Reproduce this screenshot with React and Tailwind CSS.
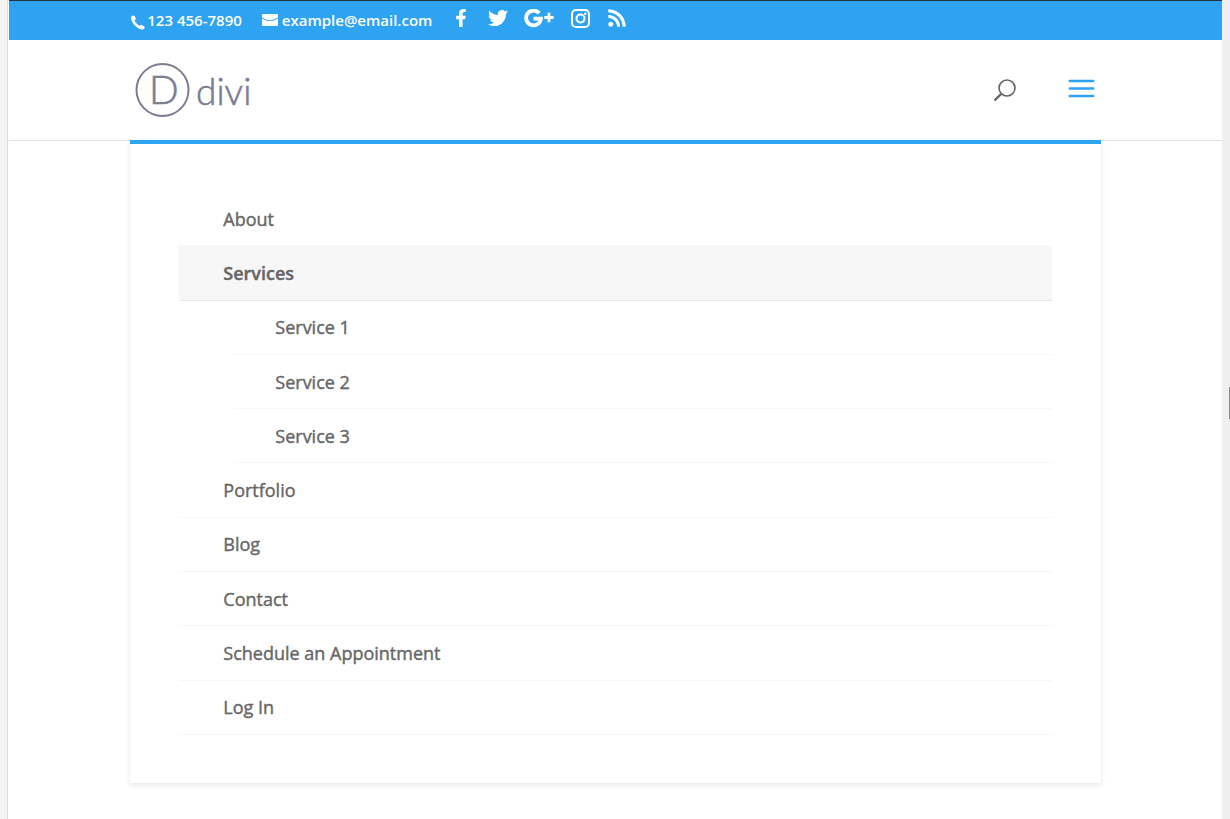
import { FaFacebookF, FaTwitter, FaRss } from 'react-icons/fa';

const rowClass = 'flex items-center border-b border-black/3 pr-6 text-lg font-normal text-[#666] [-webkit-text-stroke:0.4px_#666]';

const services = ['Service 1', 'Service 2', 'Service 3'];
const pages = ['Portfolio', 'Blog', 'Contact', 'Schedule an Appointment', 'Log In'];

function PhoneIcon() {
  return (
    <svg viewBox="0 0 14 15" className="mt-1 h-[15px] w-3.5" fill="currentColor" aria-hidden="true">
      <path d="M0.4 1.4 Q2 -0.2 3.5 0.8 L4.8 3.2 Q5.1 4.4 3.5 5.3 Q4.6 8.5 8.4 10.9 Q9.9 9.4 10.9 9.9 L13.6 11.7 Q14.2 13 12.5 14.2 Q10.4 15.4 6.9 12.9 Q1 9 0.1 3.4 Q0 2 0.4 1.4Z" />
    </svg>
  );
}

function MailIcon() {
  return (
    <svg viewBox="0 0 16 12" className="h-3 w-4" fill="currentColor" aria-hidden="true">
      <path d="M1 0H15Q16 0 16 1V3.5Q11.5 6.2 8 6.200Q4.500 6.200 0 3.500V1Q0 0 1 0Z" />
      <path d="M0 4.400Q4.500 7.100 8 7.100Q11.500 7.100 16 4.400V11Q16 12 15 12H1Q0 12 0 11Z" />
    </svg>
  );
}

function GooglePlusIcon() {
  return (
    <svg viewBox="0 0 30 19" className="h-[19px] w-[30px]" fill="none" stroke="currentColor" aria-hidden="true">
      <path d="M15.200 4.200A7.400 7.400 0 1 0 16.900 9.600H9.500" strokeWidth="3.800" />
      <path d="M25 3.800V13.200M20.300 8.500H29.700" strokeWidth="2.800" />
    </svg>
  );
}

function InstagramIcon() {
  return (
    <svg viewBox="0 0 19 19" className="h-[19px] w-[19px]" fill="none" stroke="currentColor" strokeWidth="2" aria-hidden="true">
      <rect x="1" y="1" width="17" height="17" rx="4" />
      <circle cx="9.500" cy="9.500" r="4" />
      <circle cx="14.300" cy="4.700" r="1.200" fill="currentColor" stroke="none" />
    </svg>
  );
}

function Logo() {
  return (
    <a href="#home" aria-label="divi" className="text-[#7b7d90]">
      <svg viewBox="0 0 120 56" className="h-14 w-[120px]" fill="currentColor">
        <circle cx="27.500" cy="28" r="26" fill="none" stroke="currentColor" strokeWidth="2" />
        <g fontFamily="Lato, sans-serif" fontWeight="300" stroke="currentColor" strokeWidth="0.6">
          <text x="14" y="42" fontSize="39">D</text>
          <text x="61" y="43" fontSize="37">divi</text>
        </g>
      </svg>
    </a>
  );
}

function TopBar() {
  return (
    <div className="h-10 border-t border-[#263340] bg-[#2ea3f2] text-white">
      <div className="mx-auto flex h-[38px] w-4/5 items-center text-[15px] font-semibold">
        <a href="tel:1234567890" className="ml-px flex items-center gap-0.5">
          <PhoneIcon />
          123 456-7890
        </a>
        <a href="mailto:example@email.com" className="ml-5 flex items-center gap-1">
          <MailIcon />
          example@email.com
        </a>
        <nav aria-label="Social" className="mb-1 ml-[22px] flex items-center">
          <a href="#facebook" aria-label="Facebook" className="mr-5"><FaFacebookF className="h-[18px] w-3.5" /></a>
          <a href="#twitter" aria-label="Twitter" className="mr-4"><FaTwitter className="size-5" /></a>
          <a href="#google" aria-label="Google Plus" className="mr-[17px]"><GooglePlusIcon /></a>
          <a href="#instagram" aria-label="Instagram" className="mr-[17px]"><InstagramIcon /></a>
          <a href="#rss" aria-label="RSS"><FaRss className="size-5" /></a>
        </nav>
      </div>
    </div>
  );
}

function Header() {
  return (
    <header className="border-b border-[#e2e2e2]">
      <div className="mx-auto flex h-[100px] w-4/5 items-center justify-between pr-[6px] pl-[5px]">
        <Logo />
        <div className="flex items-center gap-[52px]">
          <button type="button" aria-label="Search" className="text-[#666]">
            <svg viewBox="0 0 23 23" className="size-[23px]" fill="none" stroke="currentColor">
              <circle cx="14" cy="9" r="8" strokeWidth="1.600" />
              <path d="M8.200 14.800L1.500 21.500" strokeWidth="2.400" />
            </svg>
          </button>
          <button type="button" aria-label="Menu" aria-expanded="true" className="mb-1 text-[#2ea3f2]">
            <svg viewBox="0 0 27 19" className="h-[19px] w-[27px]" stroke="currentColor" strokeWidth="2.600" strokeLinecap="round">
              <path d="M1.800 2H25.200M1.800 9.500H25.200M1.800 17H25.200" />
            </svg>
          </button>
        </div>
      </div>
    </header>
  );
}

function Menu() {
  return (
    <nav aria-label="Main" className="mx-auto -mt-px w-4/5 border-t-4 border-[#2ea3f2] bg-white px-[49px] py-12 shadow-[0_2px_5px_rgba(0,0,0,0.1)]">
      <ul className="grid min-h-[543px] auto-rows-fr">
        <li className="grid">
          <a href="#about" className={`${rowClass} pl-11`}>About</a>
        </li>
        <li className="contents">
          <a href="#services" className="flex items-center border-b border-black/6 bg-[#f7f7f7] pr-6 pl-11 text-lg font-semibold text-[#666] [-webkit-text-stroke:0.4px_#666]">Services</a>
          <ul className="contents">
            {services.map((name) => (
              <li key={name} className="ml-[55px] grid">
                <a href="#service" className={`${rowClass} pl-[41px]`}>{name}</a>
              </li>
            ))}
          </ul>
        </li>
        {pages.map((name) => (
          <li key={name} className="grid">
            <a href="#page" className={`${rowClass} pl-11`}>{name}</a>
          </li>
        ))}
      </ul>
    </nav>
  );
}

export default function App() {
  return (
    <div className="flex min-h-screen bg-white font-['Open_Sans',sans-serif]">
      <div className="w-2 shrink-0 border-r border-[#ddd] bg-[#f3f3f3]" />
      <main className="ml-px min-w-0 flex-1">
        <TopBar />
        <Header />
        <Menu />
      </main>
      <div className="flex w-2 shrink-0 justify-end bg-[#efefef] pt-[387px]">
        <div className="h-8 w-px bg-[#8c8c8c]" />
      </div>
    </div>
  );
}
